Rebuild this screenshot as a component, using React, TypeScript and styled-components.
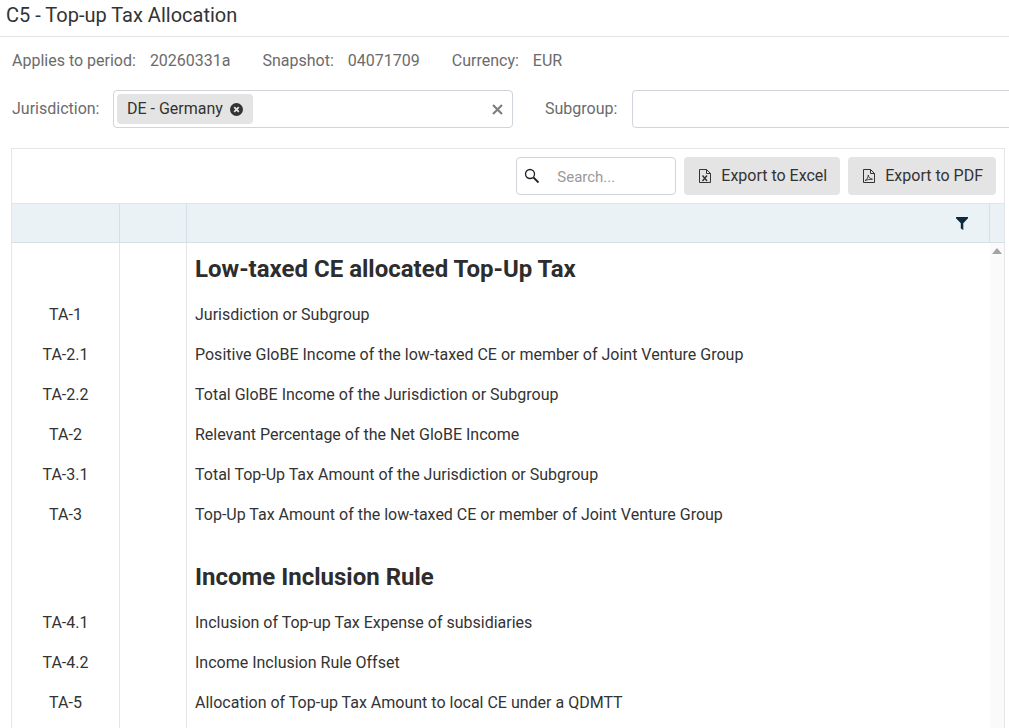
import React from 'react';
import styled, { createGlobalStyle } from 'styled-components';

const GlobalStyle = createGlobalStyle`
  html, body {
    margin: 0;
    padding: 0;
    height: 728px;
    overflow: hidden;
    background: #fff;
    font-family: Roboto, "Liberation Sans", sans-serif;
    color: #2d2d2d;
  }
`;

const Page = styled.div`
  width: 1009px;
  height: 728px;
  overflow: hidden;
`;

const TitleBar = styled.div`
  height: 36px;
  box-sizing: content-box;
  border-bottom: 1px solid #e4e4e4;
  padding-left: 6px;
  font-size: 20px;
  line-height: 30px;
  color: #333;
`;

const MetaRow = styled.div`
  display: flex;
  align-items: center;
  height: 46px;
  padding-left: 12px;
  font-size: 16px;
  color: #6b6b6b;
`;

const MetaLabel = styled.span`
  margin-right: 14px;
`;

const MetaValue = styled.span`
  margin-right: 32px;
`;

const FilterRow = styled.div`
  display: flex;
  align-items: center;
  height: 38px;
  margin-top: 7px;
  padding-left: 12px;
  font-size: 16px;
  color: #6b6b6b;
  width: 1200px;
`;

const FilterLabel = styled.span<{ $width: number }>`
  width: ${(p) => p.$width}px;
  flex: none;
  padding-bottom: 2px;
`;

const Select = styled.div<{ $width: number }>`
  width: ${(p) => p.$width}px;
  height: 38px;
  box-sizing: border-box;
  flex: none;
  display: flex;
  align-items: center;
  padding: 0 3px;
  border: 1px solid #d0d4db;
  border-radius: 4px;
  background: #fff;
`;

const Chip = styled.div`
  display: flex;
  align-items: center;
  gap: 7px;
  height: 30px;
  padding: 0 10px;
  border-radius: 4px;
  background: #e4e4e4;
  color: #333;
`;

const ChipLabel = styled.span`
  padding-bottom: 2px;
`;

const ClearButton = styled.span`
  display: flex;
  margin-left: auto;
  margin-right: 6px;
  color: #808080;
`;

const Spacer = styled.div`
  width: 32px;
  flex: none;
`;

const Panel = styled.div`
  margin: 20px 0 0 11px;
  width: 992px;
  border: 1px solid #e6e6e6;
  border-bottom: none;
  height: 600px;
  overflow: hidden;
`;

const Toolbar = styled.div`
  display: flex;
  justify-content: flex-end;
  align-items: center;
  gap: 8px;
  height: 54px;
  padding-right: 8px;
`;

const SearchBox = styled.div`
  display: flex;
  align-items: center;
  width: 160px;
  height: 38px;
  box-sizing: border-box;
  padding-left: 7px;
  border: 1px solid #d0d4db;
  border-radius: 4px;
  font-size: 15px;
  color: #9a9a9a;
`;

const SearchText = styled.span`
  margin: 2px 0 0 17px;
`;

const ExportButton = styled.button`
  display: flex;
  align-items: center;
  gap: 10px;
  height: 38px;
  padding: 0 13px 0 15px;
  border: none;
  border-radius: 4px;
  background: #e4e4e4;
  color: #333;
  font-family: inherit;
  font-size: 16px;
`;

const ExportLabel = styled.span`
  padding-bottom: 2px;
`;

const Columns = styled.div`
  display: grid;
  grid-template-columns: 108px 67px 803px 14px;
`;

const HeaderCell = styled.div<{ $last?: boolean }>`
  height: 38px;
  background: #eaf2f5;
  border-top: 1px solid #dfe5e8;
  border-bottom: 1px solid #d6dfe3;
  border-right: ${(p) => (p.$last ? 'none' : '1px solid #d6dfe3')};
  box-sizing: content-box;
  display: flex;
  align-items: center;
  justify-content: flex-end;
`;

const FilterIcon = styled.svg`
  margin: 0 21px 0 0;
`;

const Body = styled.div`
  display: grid;
  grid-template-columns: 108px 67px 803px 14px;
`;

const Cell = styled.div`
  border-right: 1px solid #e6e6e6;
  display: flex;
  align-items: center;
  font-size: 16px;
  color: #333;
`;

const CodeCell = styled(Cell)<{ $heading?: number }>`
  height: ${(p) => p.$heading ?? 40}px;
  justify-content: center;
`;

const EmptyCell = styled(Cell)<{ $heading?: number }>`
  height: ${(p) => p.$heading ?? 40}px;
`;

const TextCell = styled(Cell)<{ $heading?: number }>`
  height: ${(p) => p.$heading ?? 40}px;
  padding-left: 8px;
  border-right: none;
`;

const HeadingText = styled.span<{ $offset: number }>`
  font-size: 24px;
  font-weight: 700;
  color: #2d2d2d;
  margin-top: ${(p) => p.$offset}px;
`;

const ScrollTrack = styled.div`
  grid-column: 4;
  grid-row: 1 / span 30;
  background: #fafafa;
  display: flex;
  justify-content: center;
  padding-top: 5px;
`;

const ArrowUp = styled.div`
  width: 0;
  height: 0;
  border-left: 5px solid transparent;
  border-right: 5px solid transparent;
  border-bottom: 6px solid #a3a3a3;
`;

type Row =
  | { kind: 'heading'; text: string; height: number; offset: number }
  | { kind: 'row'; code: string; text: string };

const rows: Row[] = [
  { kind: 'heading', text: 'Low-taxed CE allocated Top-Up Tax', height: 51, offset: 0 },
  { kind: 'row', code: 'TA-1', text: 'Jurisdiction or Subgroup' },
  { kind: 'row', code: 'TA-2.1', text: 'Positive GloBE Income of the low-taxed CE or member of Joint Venture Group' },
  { kind: 'row', code: 'TA-2.2', text: 'Total GloBE Income of the Jurisdiction or Subgroup' },
  { kind: 'row', code: 'TA-2', text: 'Relevant Percentage of the Net GloBE Income' },
  { kind: 'row', code: 'TA-3.1', text: 'Total Top-Up Tax Amount of the Jurisdiction or Subgroup' },
  { kind: 'row', code: 'TA-3', text: 'Top-Up Tax Amount of the low-taxed CE or member of Joint Venture Group' },
  { kind: 'heading', text: 'Income Inclusion Rule', height: 68, offset: 18 },
  { kind: 'row', code: 'TA-4.1', text: 'Inclusion of Top-up Tax Expense of subsidiaries' },
  { kind: 'row', code: 'TA-4.2', text: 'Income Inclusion Rule Offset' },
  { kind: 'row', code: 'TA-5', text: 'Allocation of Top-up Tax Amount to local CE under a QDMTT' },
  { kind: 'row', code: '', text: '' },
];

const ExcelIcon = () => (
  <svg width="12" height="14" viewBox="0 0 12 14" fill="none" stroke="#333" strokeWidth="1">
    <path d="M.5.5h7l4 4v9H.5z" />
    <path d="M7.500.5v4h4" />
    <path d="M3.500 6.500l4.500 5.500M8 6.500L3.500 12" strokeWidth="1.400" />
  </svg>
);

const PdfIcon = () => (
  <svg width="12" height="14" viewBox="0 0 12 14" fill="none" stroke="#333" strokeWidth="1">
    <path d="M.5.5h7l4 4v9H.5z" />
    <path d="M7.500.5v4h4" />
    <path d="M2 11.500c2-1 3-2.800 3.300-5.500.3 2.400 1.700 3.800 4.200 4.200-2.600 0-5.100.4-7.500 1.300z" strokeWidth="0.9" />
  </svg>
);

export default function App() {
  return (
    <Page>
      <GlobalStyle />
      <TitleBar>C5 - Top-up Tax Allocation</TitleBar>
      <MetaRow>
        <MetaLabel>Applies to period:</MetaLabel>
        <MetaValue>20260331a</MetaValue>
        <MetaLabel>Snapshot:</MetaLabel>
        <MetaValue>04071709</MetaValue>
        <MetaLabel>Currency:</MetaLabel>
        <MetaValue>EUR</MetaValue>
      </MetaRow>
      <FilterRow>
        <FilterLabel $width={101}>Jurisdiction:</FilterLabel>
        <Select $width={400}>
          <Chip>
            <ChipLabel>DE - Germany</ChipLabel>
            <svg width="13" height="13" viewBox="0 0 13 13">
              <circle cx="6.5" cy="6.5" r="6.500" fill="#333" />
              <path d="M4.200 4.200l4.600 4.600M8.800 4.200l-4.600 4.600" stroke="#e4e4e4" strokeWidth="1.800" />
            </svg>
          </Chip>
          <ClearButton>
            <svg width="11" height="11" viewBox="0 0 11 11">
              <path d="M1 1l9 9M10 1l-9 9" stroke="currentColor" strokeWidth="2.200" />
            </svg>
          </ClearButton>
        </Select>
        <Spacer />
        <FilterLabel $width={87}>Subgroup:</FilterLabel>
        <Select $width={500} />
      </FilterRow>
      <Panel>
        <Toolbar>
          <SearchBox>
            <svg width="16" height="16" viewBox="0 0 16 16" fill="none" stroke="#222" strokeWidth="1.300">
              <circle cx="6" cy="6" r="4.500" />
              <path d="M9.500 9.500l5 5" strokeWidth="1.800" />
            </svg>
            <SearchText>Search...</SearchText>
          </SearchBox>
          <ExportButton>
            <ExcelIcon />
            <ExportLabel>Export to Excel</ExportLabel>
          </ExportButton>
          <ExportButton>
            <PdfIcon />
            <ExportLabel>Export to PDF</ExportLabel>
          </ExportButton>
        </Toolbar>
        <Columns>
          <HeaderCell />
          <HeaderCell />
          <HeaderCell>
            <FilterIcon width="12" height="13" viewBox="0 0 12 13">
              <path d="M0 0h12v1.200L7.300 6.200V13L4.800 11.500V6.200L0 1.200z" fill="#0d2b40" />
            </FilterIcon>
          </HeaderCell>
          <HeaderCell $last />
        </Columns>
        <Body>
          <ScrollTrack>
            <ArrowUp />
          </ScrollTrack>
          {rows.map((row, i) =>
            row.kind === 'heading' ? (
              <React.Fragment key={i}>
                <EmptyCell $heading={row.height} />
                <EmptyCell $heading={row.height} />
                <TextCell $heading={row.height}>
                  <HeadingText $offset={row.offset}>{row.text}</HeadingText>
                </TextCell>
              </React.Fragment>
            ) : (
              <React.Fragment key={i}>
                <CodeCell>{row.code}</CodeCell>
                <EmptyCell />
                <TextCell>{row.text}</TextCell>
              </React.Fragment>
            ),
          )}
        </Body>
      </Panel>
    </Page>
  );
}
